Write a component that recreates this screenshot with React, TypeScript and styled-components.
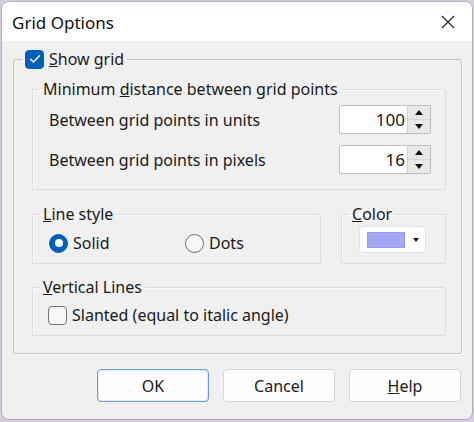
import React from 'react';
import styled, { createGlobalStyle } from 'styled-components';

const GlobalStyle = createGlobalStyle`
  html, body {
    margin: 0;
    padding: 0;
    background: #d6cee0;
  }
  body {
    font-family: "Noto Sans", "Open Sans", sans-serif;
    font-size: 16px;
    color: #1a1a1a;
  }
`;

const Window = styled.div`
  margin: 1px;
  width: 472px;
  height: 419px;
  box-sizing: border-box;
  border: 1px solid #b4b0ba;
  border-radius: 8px;
  overflow: hidden;
  background: #f0f0f0;
  display: flex;
  flex-direction: column;
`;

const TitleBar = styled.div`
  height: 39px;
  background: #ffffff;
  display: flex;
  align-items: center;
  justify-content: space-between;
  padding: 0 12px 0 10px;
  flex-shrink: 0;
`;

const Title = styled.span`
  font-size: 17px;
  color: #111;
  padding-top: 2px;
`;

const CloseButton = styled.button`
  width: 24px;
  height: 24px;
  border: none;
  background: none;
  padding: 0;
  display: flex;
  align-items: center;
  justify-content: center;
  color: #222;
`;

const Body = styled.div`
  flex: 1;
  padding: 8px 10px 0 11px;
  display: flex;
  flex-direction: column;
`;

const Group = styled.fieldset<{ $outer?: boolean; $width?: number }>`
  margin: 0;
  min-width: 0;
  border: 1px solid ${p => (p.$outer ? '#c4c4c4' : '#dddddd')};
  box-shadow: ${p => (p.$outer ? '1px 1px 0 #ffffff' : 'inset 1px 1px 0 #fafafa')};
  border-radius: 2px;
  padding: 0;
  display: flex;
  flex-direction: column;
  ${p => (p.$width ? `width: ${p.$width}px; flex-shrink: 0;` : '')}
`;

const Legend = styled.legend<{ $indent?: number }>`
  margin-left: ${p => p.$indent ?? 7}px;
  padding: 0 3px;
  height: 20px;
  line-height: 20px;
  display: flex;
  align-items: center;
  gap: 5px;
  white-space: nowrap;
`;

const OuterContent = styled.div`
  padding: 10px 15px 17px 18px;
  display: flex;
  flex-direction: column;
  gap: 13px;
`;

const DistanceContent = styled.div`
  padding: 6px 14px 15px 16px;
  display: flex;
  flex-direction: column;
  gap: 11px;
`;

const Row = styled.div`
  display: flex;
  align-items: center;
  justify-content: space-between;
`;

const SideBySide = styled.div`
  display: flex;
  gap: 20px;
  margin-top: 1px;
`;

const GrowGroup = styled(Group)`
  flex: 1;
`;

const LineStyleContent = styled.div`
  padding: 9px 10px 10px 16px;
  display: flex;
  align-items: center;
`;

const ColorContent = styled.div`
  padding: 2px 16px 10px 17px;
  display: flex;
`;

const VerticalContent = styled.div`
  padding: 8px 10px 10px 15px;
  display: flex;
`;

const Option = styled.label<{ $width?: number }>`
  display: flex;
  align-items: center;
  gap: 5px;
  height: 20px;
  width: ${p => (p.$width ? `${p.$width}px` : 'auto')};
`;

const CheckBox = styled.span<{ $checked?: boolean }>`
  width: 19px;
  height: 19px;
  box-sizing: border-box;
  border-radius: 4px;
  border: 1px solid ${p => (p.$checked ? '#005fb8' : '#737373')};
  background: ${p => (p.$checked ? '#005fb8' : '#f7f7f7')};
  display: flex;
  align-items: center;
  justify-content: center;
  flex-shrink: 0;
`;

const Radio = styled.span<{ $checked?: boolean }>`
  width: 19px;
  height: 19px;
  box-sizing: border-box;
  border-radius: 50%;
  border: 1px solid ${p => (p.$checked ? '#005fb8' : '#6e6e6e')};
  background: ${p => (p.$checked ? '#005fb8' : '#f7f7f7')};
  display: flex;
  align-items: center;
  justify-content: center;
  flex-shrink: 0;

  &::after {
    content: '';
    display: ${p => (p.$checked ? 'block' : 'none')};
    width: 8px;
    height: 8px;
    border-radius: 50%;
    background: #ffffff;
  }
`;

const Spin = styled.div`
  width: 92px;
  height: 29px;
  box-sizing: border-box;
  border: 1px solid #bdbdbd;
  border-radius: 2px;
  background: #ffffff;
  display: flex;
`;

const SpinValue = styled.div`
  flex: 1;
  text-align: right;
  line-height: 27px;
  padding-right: 2px;
  font-size: 17px;
`;

const SpinButtons = styled.div`
  width: 22px;
  display: flex;
  flex-direction: column;
  background: #e8e8e8;
  border-left: 1px solid #d2d2d2;
`;

const SpinArrow = styled.div<{ $down?: boolean }>`
  flex: 1;
  display: flex;
  align-items: center;
  justify-content: center;
  border-top: ${p => (p.$down ? '1px solid #d6d6d6' : 'none')};

  &::after {
    content: '';
    width: 0;
    height: 0;
    border-left: 4px solid transparent;
    border-right: 4px solid transparent;
    ${p => (p.$down ? 'border-top: 5px solid #111;' : 'border-bottom: 5px solid #111;')}
  }
`;

const ColorButton = styled.div`
  width: 67px;
  height: 27px;
  box-sizing: border-box;
  border: 1px solid #e2e2e2;
  border-radius: 4px;
  background: #ffffff;
  display: flex;
  align-items: center;
  padding-left: 7px;
  gap: 8px;
`;

const Swatch = styled.div<{ $color: string }>`
  width: 38px;
  height: 16px;
  background: ${p => p.$color};
  border: 1px solid #9a9ad8;
  box-sizing: border-box;
`;

const DropArrow = styled.div`
  width: 0;
  height: 0;
  border-left: 3.5px solid transparent;
  border-right: 3.5px solid transparent;
  border-top: 4px solid #111;
`;

const ButtonRow = styled.div`
  display: flex;
  justify-content: flex-end;
  gap: 14px;
  margin-top: 15px;
  padding-right: 1px;
`;

const DialogButton = styled.button<{ $default?: boolean }>`
  width: 112px;
  height: 33px;
  box-sizing: border-box;
  border: 1px solid ${p => (p.$default ? '#6f9ccc' : '#d6d6d6')};
  box-shadow: ${p => (p.$default ? 'inset 0 0 0 1px #dfe9f5' : 'none')};
  border-radius: 4px;
  background: #fdfdfd;
  font-family: inherit;
  font-size: 16px;
  color: #1a1a1a;
  padding: 0;
`;

const Check = () => (
  <svg width="12" height="10" viewBox="0 0 12 10">
    <path d="M1.5 5.2 L4.5 8 L10.5 1.8" fill="none" stroke="#fff" strokeWidth="1.4" strokeLinecap="round" strokeLinejoin="round" />
  </svg>
);

const SpinBox = ({ value }: { value: string }) => (
  <Spin>
    <SpinValue>{value}</SpinValue>
    <SpinButtons>
      <SpinArrow />
      <SpinArrow $down />
    </SpinButtons>
  </Spin>
);

export default function App() {
  return (
    <>
      <GlobalStyle />
      <Window>
        <TitleBar>
          <Title>Grid Options</Title>
          <CloseButton>
            <svg width="14" height="14" viewBox="0 0 14 14">
              <path d="M1 1 L13 13 M13 1 L1 13" stroke="#222" strokeWidth="1.2" />
            </svg>
          </CloseButton>
        </TitleBar>
        <Body>
          <Group $outer>
            <Legend $indent={8}>
              <CheckBox $checked><Check /></CheckBox>
              <span><u>S</u>how grid</span>
            </Legend>
            <OuterContent>
              <Group>
                <Legend><span>Minimum <u>d</u>istance between grid points</span></Legend>
                <DistanceContent>
                  <Row>
                    <span>Between grid points in units</span>
                    <SpinBox value="100" />
                  </Row>
                  <Row>
                    <span>Between grid points in pixels</span>
                    <SpinBox value="16" />
                  </Row>
                </DistanceContent>
              </Group>
              <SideBySide>
                <GrowGroup>
                  <Legend><span><u>L</u>ine style</span></Legend>
                  <LineStyleContent>
                    <Option $width={136}>
                      <Radio $checked />
                      <span>Solid</span>
                    </Option>
                    <Option>
                      <Radio />
                      <span>Dots</span>
                    </Option>
                  </LineStyleContent>
                </GrowGroup>
                <Group $width={103}>
                  <Legend><span><u>C</u>olor</span></Legend>
                  <ColorContent>
                    <ColorButton>
                      <Swatch $color="#a7a7f8" />
                      <DropArrow />
                    </ColorButton>
                  </ColorContent>
                </Group>
              </SideBySide>
              <Group>
                <Legend><span><u>V</u>ertical Lines</span></Legend>
                <VerticalContent>
                  <Option>
                    <CheckBox />
                    <span>Slanted (equal to italic angle)</span>
                  </Option>
                </VerticalContent>
              </Group>
            </OuterContent>
          </Group>
          <ButtonRow>
            <DialogButton $default>OK</DialogButton>
            <DialogButton>Cancel</DialogButton>
            <DialogButton><u>H</u>elp</DialogButton>
          </ButtonRow>
        </Body>
      </Window>
    </>
  );
}
